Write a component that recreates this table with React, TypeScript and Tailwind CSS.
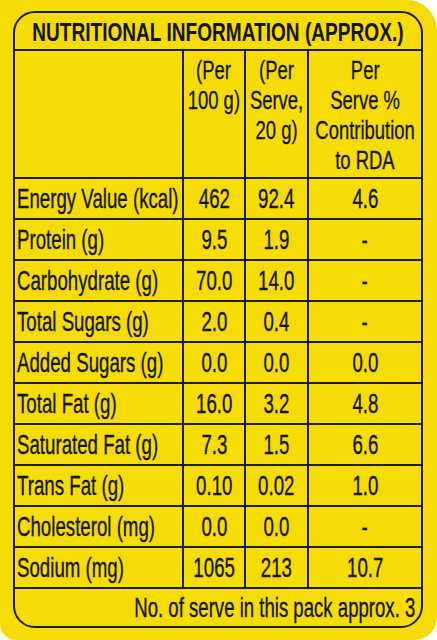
import React from "react";

const FONT = { fontFamily: '"Liberation Sans", Arial, sans-serif' };

const rows: [string, string, string, string][] = [
  ["Energy Value (kcal)", "462", "92.4", "4.6"],
  ["Protein (g)", "9.5", "1.9", "-"],
  ["Carbohydrate (g)", "70.0", "14.0", "-"],
  ["Total Sugars (g)", "2.0", "0.4", "-"],
  ["Added Sugars (g)", "0.0", "0.0", "0.0"],
  ["Total Fat (g)", "16.0", "3.2", "4.8"],
  ["Saturated Fat (g)", "7.3", "1.5", "6.6"],
  ["Trans Fat (g)", "0.10", "0.02", "1.0"],
  ["Cholesterol (mg)", "0.0", "0.0", "-"],
  ["Sodium (mg)", "1065", "213", "10.7"],
];

function Head({ lines }: { lines: string[] }) {
  return (
    <div className="w-full flex flex-col items-center pt-[4px]">
      {lines.map((l) => (
        <span
          key={l}
          className="inline-block whitespace-nowrap text-[26px] leading-[30px] [transform:scaleX(0.71)] origin-center [-webkit-text-stroke:0.3px_#151510]"
        >
          {l}
        </span>
      ))}
    </div>
  );
}

function Num({ v }: { v: string }) {
  return (
    <span className="inline-block whitespace-nowrap text-[28px] leading-none [transform:scaleX(0.667)] origin-center [-webkit-text-stroke:0.35px_#151510]">
      {v}
    </span>
  );
}

export default function App() {
  return (
    <div className="w-[437px] h-[640px] bg-white" style={FONT}>
      <div className="w-[437px] h-[640px] bg-[#f6dc06] rounded-bl-[16px] rounded-br-[22px] rounded-tr-[30px] pt-[11px] pl-[13px] text-[#151510]">
        <div className="w-[410px] h-[617px] border-2 border-[#1c1c12] rounded-[22px] flex flex-col overflow-hidden">
          <div className="h-[38px] border-b-2 border-[#1c1c12] flex items-center justify-center pt-[3px]">
            <span className="inline-block whitespace-nowrap text-[26.5px] font-bold leading-none [transform:scaleX(0.72)] origin-center">
              NUTRITIONAL INFORMATION (APPROX.)
            </span>
          </div>
          <div className="grid grid-cols-[169px_62px_63px_minmax(0,1fr)]">
            <div className="h-[128px] border-r-2 border-b-2 border-[#1c1c12]" />
            <div className="min-w-0 h-[128px] border-r-2 border-b-2 border-[#1c1c12] flex justify-center">
              <Head lines={["(Per", "100 g)"]} />
            </div>
            <div className="min-w-0 h-[128px] border-r-2 border-b-2 border-[#1c1c12] flex justify-center">
              <Head lines={["(Per", "Serve,", "20 g)"]} />
            </div>
            <div className="min-w-0 h-[128px] border-b-2 border-[#1c1c12] flex justify-center">
              <Head lines={["Per", "Serve %", "Contribution", "to RDA"]} />
            </div>
            {rows.map((r) => (
              <React.Fragment key={r[0]}>
                <div className="min-w-0 h-[41px] border-r-2 border-b-2 border-[#1c1c12] flex items-center pl-[2px]">
                  <span className="inline-block whitespace-nowrap text-[28px] leading-none [transform:scaleX(0.667)] origin-left [-webkit-text-stroke:0.35px_#151510]">
                    {r[0]}
                  </span>
                </div>
                <div className="min-w-0 h-[41px] border-r-2 border-b-2 border-[#1c1c12] flex items-center justify-center">
                  <Num v={r[1]} />
                </div>
                <div className="min-w-0 h-[41px] border-r-2 border-b-2 border-[#1c1c12] flex items-center justify-center">
                  <Num v={r[2]} />
                </div>
                <div className="min-w-0 h-[41px] border-b-2 border-[#1c1c12] flex items-center justify-center">
                  <Num v={r[3]} />
                </div>
              </React.Fragment>
            ))}
          </div>
          <div className="flex-1 flex items-center justify-end pr-[6px]">
            <span className="inline-block whitespace-nowrap text-[28px] leading-none [transform:scaleX(0.664)] origin-right [-webkit-text-stroke:0.35px_#151510]">
              No. of serve in this pack approx. 3
            </span>
          </div>
        </div>
      </div>
    </div>
  );
}
